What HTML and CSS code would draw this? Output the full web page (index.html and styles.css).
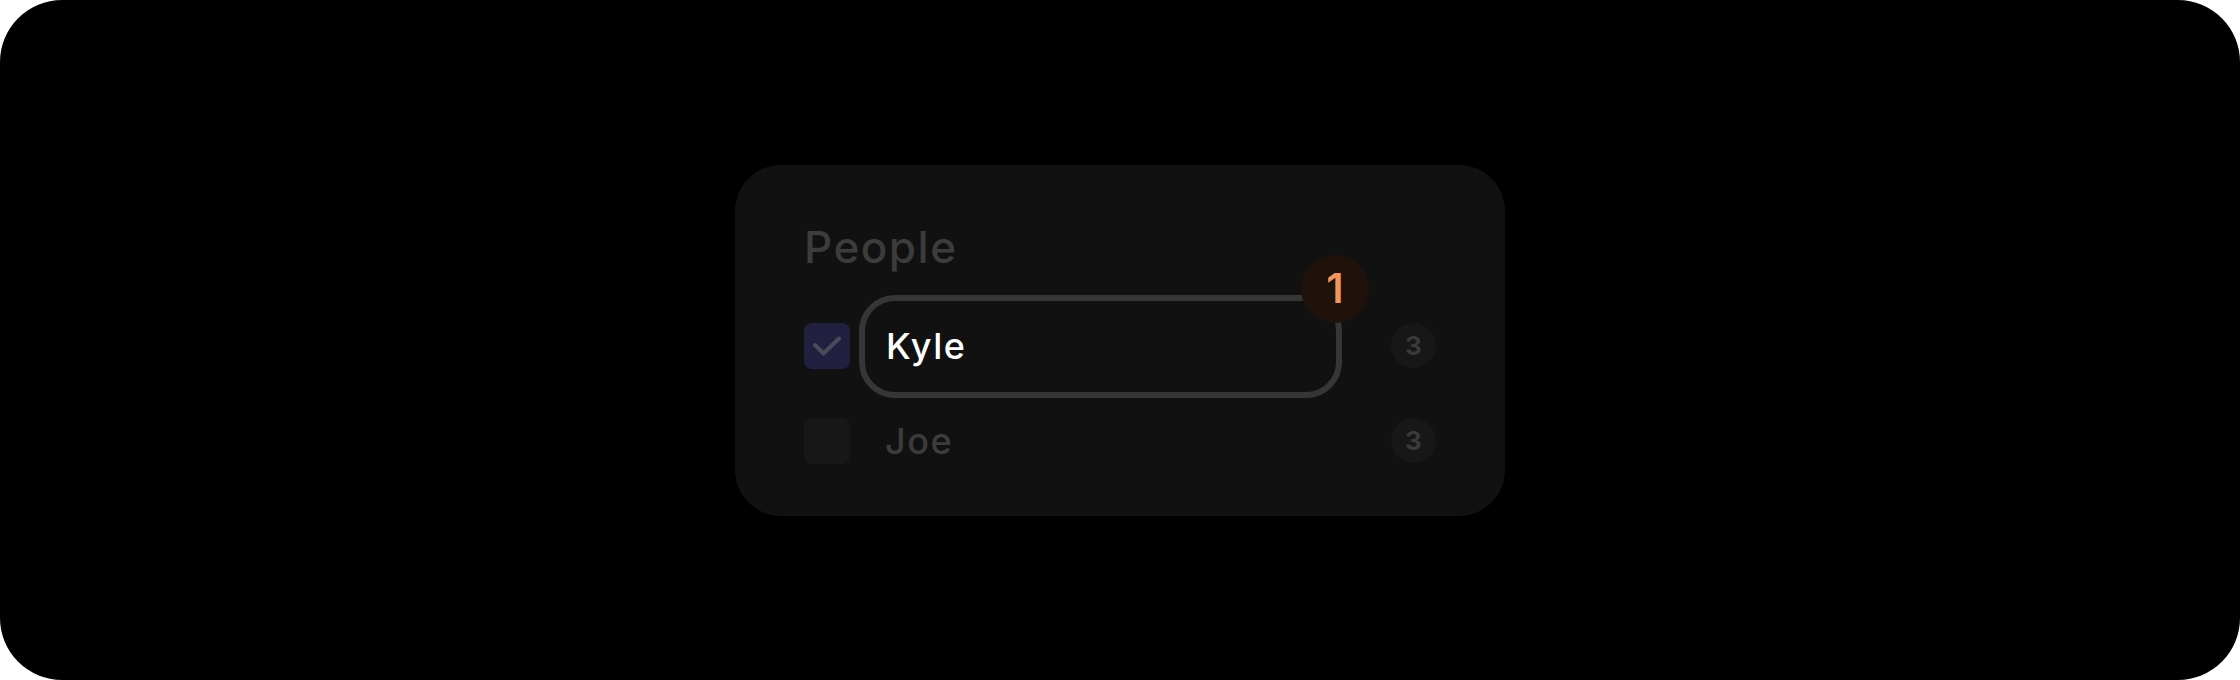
FILE: index.html
```html
<!DOCTYPE html>
<html lang="en">
<head>
<meta charset="utf-8">
<title>People</title>
<link rel="stylesheet" href="styles.css">
</head>
<body>
<div class="frame">
  <section class="card">
    <h2 class="title">People</h2>
    <ul class="list">
      <li class="row">
        <span class="check is-checked">
          <svg viewBox="0 0 46 46" width="46" height="46"><path d="M11 22 L19.5 30.5 L35 15.5" fill="none" stroke="#4b4a58" stroke-width="4" stroke-linecap="round" stroke-linejoin="round"/></svg>
        </span>
        <div class="name-edit">
          <span class="name is-active">Kyle</span>
          <span class="badge-new">1</span>
        </div>
        <span class="count">3</span>
      </li>
      <li class="row">
        <span class="check"></span>
        <div class="name-cell">
          <span class="name">Joe</span>
        </div>
        <span class="count">3</span>
      </li>
    </ul>
  </section>
</div>
</body>
</html>
```

FILE: styles.css
```css
* { box-sizing: border-box; }
html, body { margin: 0; padding: 0; background: #ffffff; }
body { font-family: Inter, "Noto Sans", sans-serif; }

.frame {
  width: 2240px;
  height: 680px;
  background: #000000;
  border-radius: 62px;
  display: flex;
  align-items: center;
  justify-content: center;
}

.card {
  width: 770px;
  height: 351px;
  background: #111111;
  border-radius: 46px;
  padding: 54px 69px 52px 69px;
}

.title {
  margin: 0 0 48px 0;
  font-size: 44px;
  line-height: 56px;
  font-weight: 500;
  color: #3c3c3c;
  letter-spacing: 1.5px;
}

.list {
  list-style: none;
  margin: 0;
  padding: 0;
  display: flex;
  flex-direction: column;
  gap: 49px;
}

.row {
  display: flex;
  align-items: center;
  height: 46px;
}

.check {
  flex: 0 0 46px;
  width: 46px;
  height: 46px;
  border-radius: 8px;
  background: #171717;
  margin-right: 35px;
  display: flex;
}
.check.is-checked { background: #222040; }

.name-cell { flex: 1; }

.name {
  display: block;
  font-size: 36px;
  line-height: 46px;
  font-weight: 500;
  color: #3c3c3c;
  letter-spacing: 1.5px;
}
.name.is-active { color: #ffffff; }

.name-edit {
  flex: 1;
  position: relative;
  margin: -27px 49px -28px -26px;
  padding: 22px 21px 23px 21px;
  border: 6px solid #363636;
  border-radius: 36px;
}

.badge-new {
  position: absolute;
  top: -46px;
  right: -33px;
  width: 68px;
  height: 68px;
  border-radius: 50%;
  background: #1f120b;
  color: #f4955b;
  font-size: 41px;
  font-weight: 600;
  line-height: 1;
  display: flex;
  align-items: center;
  justify-content: center;
}

.count {
  flex: 0 0 45px;
  width: 45px;
  height: 45px;
  border-radius: 50%;
  background: #171717;
  color: #3a3a3a;
  font-size: 26px;
  font-weight: 700;
  line-height: 1;
  display: flex;
  align-items: center;
  justify-content: center;
}
```
